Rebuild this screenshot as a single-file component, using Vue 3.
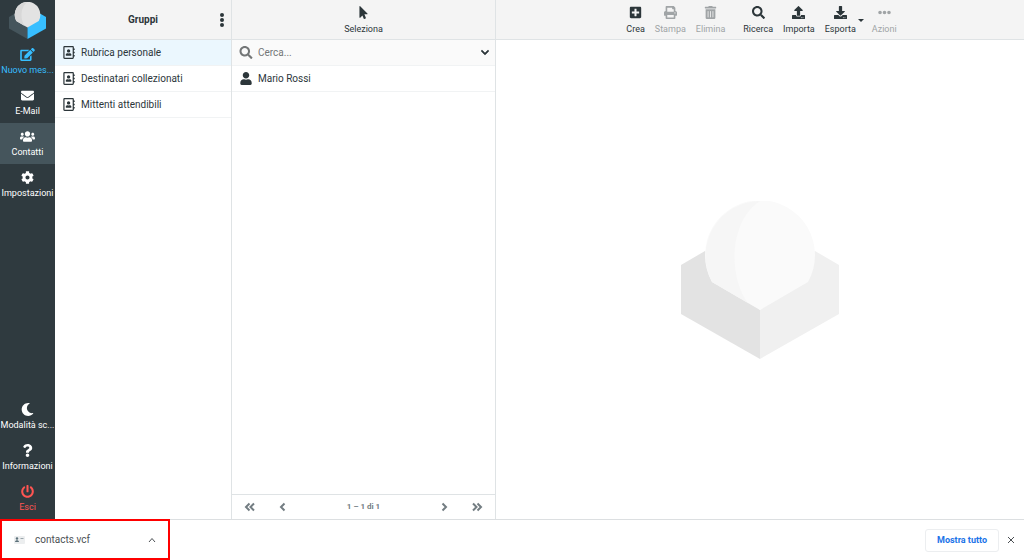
<script setup>
import { ref } from 'vue'

const icons = {
  edit: { box: '0 0 576 512', d: 'M402.6 83.2l90.2 90.2c3.8 3.8 3.8 10 0 13.8L274.4 405.6l-92.8 10.3c-12.4 1.4-22.9-9.1-21.5-21.5l10.3-92.8L388.8 83.2c3.8-3.8 10-3.8 13.8 0zm162-22.9l-48.8-48.8c-15.2-15.2-39.9-15.2-55.2 0l-35.4 35.4c-3.8 3.8-3.8 10 0 13.8l90.2 90.2c3.8 3.8 10 3.8 13.8 0l35.4-35.4c15.2-15.3 15.2-40 0-55.2zM384 346.2V448H64V128h229.8c3.2 0 6.2-1.3 8.5-3.5l40-40c7.6-7.6 2.2-20.5-8.5-20.5H48C21.5 64 0 85.5 0 112v352c0 26.5 21.5 48 48 48h352c26.5 0 48-21.5 48-48V306.2c0-10.7-12.9-16-20.5-8.5l-40 40c-2.2 2.3-3.5 5.3-3.5 8.5z' },
  mail: { box: '0 0 512 512', d: 'M502.3 190.8c3.9-3.1 9.7-.2 9.7 4.7V400c0 26.5-21.5 48-48 48H48c-26.5 0-48-21.5-48-48V195.6c0-5 5.7-7.8 9.7-4.7 22.4 17.4 52.1 39.5 154.1 113.6 21.1 15.4 56.7 47.8 92.2 47.6 35.7.3 72-32.8 92.3-47.6 102-74.1 131.6-96.3 154-113.7zM256 320c23.2.4 56.6-29.2 73.4-41.4 132.7-96.3 142.8-104.7 173.4-128.7 5.8-4.5 9.2-11.5 9.2-18.9v-19c0-26.5-21.5-48-48-48H48c-26.5 0-48 21.5-48 48v19c0 7.4 3.4 14.3 9.2 18.9 30.6 23.9 40.7 32.4 173.4 128.7 16.8 12.2 50.2 41.8 73.4 41.4z' },
  users: { box: '0 0 640 512', d: 'M96 224c35.3 0 64-28.7 64-64s-28.7-64-64-64-64 28.7-64 64 28.7 64 64 64zm448 0c35.3 0 64-28.7 64-64s-28.7-64-64-64-64 28.7-64 64 28.7 64 64 64zm32 32h-64c-17.6 0-33.5 7.1-45.1 18.6 40.3 22.1 68.9 62 75.1 109.4h66c17.7 0 32-14.3 32-32v-32c0-35.3-28.7-64-64-64zm-256 0c61.9 0 112-50.1 112-112S381.9 32 320 32 208 82.1 208 144s50.1 112 112 112zm76.8 32h-8.3c-20.8 10-43.9 16-68.5 16s-47.6-6-68.5-16h-8.3C179.6 288 128 339.6 128 403.2V432c0 26.5 21.5 48 48 48h288c26.5 0 48-21.5 48-48v-28.8c0-63.6-51.6-115.2-115.2-115.2zm-223.7-13.4C161.5 263.1 145.6 256 128 256H64c-35.3 0-64 28.7-64 64v32c0 17.7 14.3 32 32 32h65.9c6.3-47.4 34.9-87.3 75.2-109.4z' },
  cog: { box: '0 0 512 512', d: 'M487.4 315.7l-42.6-24.6c4.3-23.2 4.3-47 0-70.2l42.6-24.6c4.9-2.8 7.1-8.6 5.5-14-11.1-35.6-30-67.8-54.7-94.6-3.8-4.1-10-5.1-14.8-2.3L380.8 110c-17.9-15.4-38.5-27.3-60.8-35.1V25.8c0-5.6-3.9-10.5-9.4-11.7-36.7-8.2-74.3-7.8-109.2 0-5.5 1.2-9.4 6.1-9.4 11.7V75c-22.2 7.9-42.8 19.8-60.8 35.1L88.7 85.5c-4.9-2.8-11-1.9-14.8 2.3-24.7 26.7-43.6 58.9-54.7 94.6-1.7 5.4.6 11.2 5.5 14L67.3 221c-4.3 23.2-4.3 47 0 70.2l-42.6 24.6c-4.9 2.8-7.1 8.6-5.5 14 11.1 35.6 30 67.8 54.7 94.6 3.8 4.1 10 5.1 14.8 2.3l42.6-24.6c17.9 15.4 38.5 27.3 60.8 35.1v49.2c0 5.6 3.9 10.5 9.4 11.7 36.7 8.2 74.3 7.8 109.2 0 5.5-1.2 9.4-6.1 9.4-11.7v-49.2c22.2-7.9 42.8-19.8 60.8-35.1l42.6 24.6c4.9 2.8 11 1.9 14.8-2.3 24.7-26.7 43.6-58.9 54.7-94.6 1.5-5.5-.7-11.3-5.6-14.1zM256 336c-44.1 0-80-35.9-80-80s35.9-80 80-80 80 35.9 80 80-35.9 80-80 80z' },
  moon: { box: '0 0 512 512', d: 'M283.2 512c79 0 151.1-35.9 198.9-94.8 7-8.7-.7-21.4-11.6-19.3-124.2 23.6-238.3-71.6-238.3-197 0-72.2 38.7-138.6 101.5-174.4 9.7-5.5 7.3-20.2-3.7-22.2A258.2 258.2 0 0 0 283.2 0c-141.3 0-256 114.5-256 256 0 141.3 114.5 256 256 256z' },
  question: { box: '0 0 384 512', d: 'M202 0C122.2 0 70.5 32.7 29.9 91c-7.4 10.6-5.1 25.1 5.2 32.9l43.1 32.7c10.4 7.9 25.1 6 33.3-4.1 25-31.4 43.6-49.5 82.7-49.5 30.8 0 68.8 19.8 68.8 49.6 0 22.6-18.6 34.2-49 51.2-35.4 19.9-82.3 44.6-82.3 106.4V320c0 13.3 10.7 24 24 24h72.5c13.3 0 24-10.7 24-24v-5.8c0-42.9 125.3-44.6 125.3-160.6C377.5 66.3 286.9 0 202 0zM192 373.5c-38.2 0-69.3 31.1-69.3 69.3S153.8 512 192 512s69.3-31.1 69.3-69.3-31.1-69.2-69.3-69.2z' },
  power: { box: '0 0 512 512', d: 'M400 54.1c63 45 104 118.6 104 201.9 0 136.8-110.8 247.7-247.5 248C120 504.3 8.2 393 8 256.4 7.9 173.1 48.9 99.3 111.8 54.2c11.7-8.3 28-4.8 35 7.7L162.6 90c5.9 10.5 3.1 23.8-6.6 31-41.5 30.8-68 79.6-68 134.9-.1 92.3 74.5 168.1 168 168.1 91.6 0 168.6-74.2 168-169.1-.3-51.8-24.7-101.8-68.1-134-9.7-7.2-12.4-20.5-6.5-30.9l15.8-28.1c7-12.4 23.2-16.1 34.8-7.8zM296 264V24c0-13.3-10.7-24-24-24h-32c-13.3 0-24 10.7-24 24v240c0 13.3 10.7 24 24 24h32c13.3 0 24-10.7 24-24z' },
  book: { box: '0 0 448 512', d: 'M436 160c6.6 0 12-5.4 12-12v-40c0-6.6-5.4-12-12-12h-20V48c0-26.5-21.5-48-48-48H48C21.5 0 0 21.5 0 48v416c0 26.5 21.5 48 48 48h320c26.5 0 48-21.5 48-48v-48h20c6.6 0 12-5.4 12-12v-40c0-6.6-5.4-12-12-12h-20v-64h20c6.6 0 12-5.4 12-12v-40c0-6.6-5.4-12-12-12h-20v-64h20zm-68 304H48V48h320v416zM208 256c35.3 0 64-28.7 64-64s-28.7-64-64-64-64 28.7-64 64 28.7 64 64 64zm-89.6 128h179.2c12.4 0 22.4-8.6 22.4-19.2v-19.2c0-31.8-30.1-57.6-67.2-57.6-10.8 0-18.7 8-44.8 8-26.9 0-33.4-8-44.8-8-37.1 0-67.2 25.8-67.2 57.6v19.2c0 10.6 10 19.2 22.4 19.2z' },
  pointer: { box: '0 0 320 512', d: 'M302.2 329.1H196.1l55.8 136c3.9 9.4-.5 20-9.4 24l-49.2 21.4c-9.2 4-19.4-.6-23.3-9.7L117 371.7l-86.7 89.1C18.7 472.7 0 463.6 0 448V18.3C0 1.9 19.9-6.1 30.3 5.4l284.4 292.6c11.5 11.2 3 31.1-12.5 31.1z' },
  search: { box: '0 0 512 512', d: 'M505 442.7L405.3 343c-4.5-4.5-10.6-7-17-7H372c27.6-35.3 44-79.7 44-128C416 93.1 322.9 0 208 0S0 93.1 0 208s93.1 208 208 208c48.3 0 92.7-16.4 128-44v16.3c0 6.4 2.5 12.5 7 17l99.7 99.7c9.4 9.4 24.6 9.4 33.9 0l28.3-28.3c9.4-9.4 9.4-24.6.1-34zM208 336c-70.7 0-128-57.2-128-128 0-70.7 57.2-128 128-128 70.7 0 128 57.2 128 128 0 70.7-57.2 128-128 128z' },
  user: { box: '0 0 448 512', d: 'M224 256c70.7 0 128-57.3 128-128S294.7 0 224 0 96 57.3 96 128s57.3 128 128 128zm89.6 32h-16.7c-22.2 10.2-46.9 16-72.9 16s-50.6-5.8-72.9-16h-16.7C60.2 288 0 348.2 0 422.4V464c0 26.5 21.5 48 48 48h352c26.5 0 48-21.5 48-48v-41.6c0-74.2-60.2-134.4-134.4-134.4z' },
  down: { box: '0 0 448 512', d: 'M207 381.5L12.7 187.1c-9.4-9.4-9.4-24.6 0-33.9l22.7-22.7c9.4-9.4 24.5-9.4 33.9 0L224 284.5l154.7-154c9.4-9.4 24.5-9.4 33.9 0l22.7 22.7c9.4 9.4 9.4 24.6 0 33.9L241 381.5c-9.4 9.4-24.6 9.4-34 0z' },
  plus: { box: '0 0 448 512', d: 'M400 32H48C21.5 32 0 53.5 0 80v352c0 26.5 21.5 48 48 48h352c26.5 0 48-21.5 48-48V80c0-26.5-21.5-48-48-48zm-32 252c0 6.6-5.4 12-12 12h-92v92c0 6.6-5.4 12-12 12h-56c-6.6 0-12-5.4-12-12v-92H92c-6.6 0-12-5.4-12-12v-56c0-6.6 5.4-12 12-12h92v-92c0-6.6 5.4-12 12-12h56c6.6 0 12 5.4 12 12v92h92c6.6 0 12 5.4 12 12v56z' },
  print: { box: '0 0 512 512', d: 'M448 192V77.3c0-8.5-3.4-16.7-9.4-22.7L393.4 9.4c-6-6-14.2-9.4-22.7-9.4H96C78.3 0 64 14.3 64 32v160c-35.3 0-64 28.7-64 64v112c0 8.8 7.2 16 16 16h48v96c0 17.7 14.3 32 32 32h320c17.7 0 32-14.3 32-32v-96h48c8.8 0 16-7.2 16-16V256c0-35.3-28.7-64-64-64zm-64 256H128v-96h256v96zm0-224H128V64h192v48c0 8.8 7.2 16 16 16h48v96zm48 72c-13.3 0-24-10.7-24-24s10.7-24 24-24 24 10.7 24 24-10.7 24-24 24z' },
  trash: { box: '0 0 448 512', d: 'M32 464a48 48 0 0 0 48 48h288a48 48 0 0 0 48-48V128H32zm272-256a16 16 0 0 1 32 0v224a16 16 0 0 1-32 0zm-96 0a16 16 0 0 1 32 0v224a16 16 0 0 1-32 0zm-96 0a16 16 0 0 1 32 0v224a16 16 0 0 1-32 0zM432 32H312l-9.4-18.7A24 24 0 0 0 281.1 0H166.8a23.7 23.7 0 0 0-21.4 13.3L136 32H16A16 16 0 0 0 0 48v32a16 16 0 0 0 16 16h416a16 16 0 0 0 16-16V48a16 16 0 0 0-16-16z' },
  upload: { box: '0 0 512 512', d: 'M296 384h-80c-13.3 0-24-10.7-24-24V192h-87.7c-17.8 0-26.7-21.5-14.1-34.1L242.3 5.7c7.5-7.5 19.8-7.5 27.3 0l152.2 152.2c12.6 12.6 3.7 34.1-14.1 34.1H320v168c0 13.3-10.7 24-24 24zm216-8v112c0 13.3-10.7 24-24 24H24c-13.3 0-24-10.7-24-24V376c0-13.3 10.7-24 24-24h136v8c0 30.9 25.1 56 56 56h80c30.9 0 56-25.1 56-56v-8h136c13.3 0 24 10.7 24 24zm-124 88c0-11-9-20-20-20s-20 9-20 20 9 20 20 20 20-9 20-20zm64 0c0-11-9-20-20-20s-20 9-20 20 9 20 20 20 20-9 20-20z' },
  download: { box: '0 0 512 512', d: 'M216 0h80c13.3 0 24 10.7 24 24v168h87.7c17.8 0 26.7 21.5 14.1 34.1L269.7 378.3c-7.5 7.5-19.8 7.5-27.3 0L90.1 226.1c-12.6-12.6-3.7-34.1 14.1-34.1H192V24c0-13.3 10.7-24 24-24zm296 376v112c0 13.3-10.7 24-24 24H24c-13.3 0-24-10.7-24-24V376c0-13.3 10.7-24 24-24h146.7l49 49c20.1 20.1 52.5 20.1 72.6 0l49-49H488c13.3 0 24 10.7 24 24zm-124 88c0-11-9-20-20-20s-20 9-20 20 9 20 20 20 20-9 20-20zm64 0c0-11-9-20-20-20s-20 9-20 20 9 20 20 20 20-9 20-20z' },
  dots: { box: '0 0 512 512', d: 'M328 256a72 72 0 1 1-144 0 72 72 0 0 1 144 0zm104-72a72 72 0 1 0 0 144 72 72 0 0 0 0-144zM80 184a72 72 0 1 0 0 144 72 72 0 0 0 0-144z' }
}

const mainMenu = [
  { label: 'Nuovo mes...', icon: 'edit', kind: 'compose' },
  { label: 'E-Mail', icon: 'mail' },
  { label: 'Contatti', icon: 'users', kind: 'current' },
  { label: 'Impostazioni', icon: 'cog' }
]
const footMenu = [
  { label: 'Modalità sc...', icon: 'moon' },
  { label: 'Informazioni', icon: 'question' },
  { label: 'Esci', icon: 'power', kind: 'logout' }
]
const groups = ['Rubrica personale', 'Destinatari collezionati', 'Mittenti attendibili']
const selected = ref(0)
const query = ref('')
const tools = [
  { label: 'Crea', icon: 'plus' },
  { label: 'Stampa', icon: 'print', disabled: true },
  { label: 'Elimina', icon: 'trash', disabled: true },
  { label: 'Ricerca', icon: 'search', spaced: true },
  { label: 'Importa', icon: 'upload' },
  { label: 'Esporta', icon: 'download', menu: true },
  { label: 'Azioni', icon: 'dots', disabled: true }
]
</script>

<template>
  <div class="window">
    <div class="app">
      <nav class="taskbar" aria-label="Menu principale">
        <svg class="logo" viewBox="0 0 158 158" aria-hidden="true">
          <path fill="#45555c" d="M0 64L24 50L79 109V158L0 113Z" />
          <path fill="#37beff" d="M158 64L134 50L79 109V158L158 113Z" />
          <path fill="#e3e3e3" d="M79 109L31 81A55 55 0 1 1 127 81Z" />
          <path fill="#d8d8d8" d="M67 102L31 81A55 55 0 0 1 79 0C48 20 47 76 67 102Z" />
        </svg>
        <a v-for="m in mainMenu" :key="m.label" href="#" class="task" :class="m.kind">
          <svg class="glyph" :viewBox="icons[m.icon].box" aria-hidden="true"><path :d="icons[m.icon].d" /></svg>
          <span>{{ m.label }}</span>
        </a>
        <div class="spacer"></div>
        <a v-for="m in footMenu" :key="m.label" href="#" class="task" :class="m.kind">
          <svg class="glyph" :viewBox="icons[m.icon].box" aria-hidden="true"><path :d="icons[m.icon].d" /></svg>
          <span>{{ m.label }}</span>
        </a>
      </nav>

      <section class="groups">
        <header class="head">
          <h2>Gruppi</h2>
          <button class="kebab" type="button" aria-label="Azioni gruppo">
            <svg viewBox="0 0 4 14"><circle cx="2" cy="2" r="2" /><circle cx="2" cy="7" r="2" /><circle cx="2" cy="12" r="2" /></svg>
          </button>
        </header>
        <ul>
          <li v-for="(g, i) in groups" :key="g">
            <a href="#" class="row" :class="{ selected: i === selected }" @click.prevent="selected = i">
              <svg class="rowicon" :viewBox="icons.book.box" aria-hidden="true"><path :d="icons.book.d" /></svg>
              <span>{{ g }}</span>
            </a>
          </li>
        </ul>
      </section>

      <section class="contacts">
        <header class="head">
          <button class="tool" type="button">
            <svg class="glyph" :viewBox="icons.pointer.box" aria-hidden="true"><path :d="icons.pointer.d" /></svg>
            <span>Seleziona</span>
          </button>
        </header>
        <div class="row search">
          <svg class="rowicon" :viewBox="icons.search.box" aria-hidden="true"><path :d="icons.search.d" /></svg>
          <input v-model="query" type="text" placeholder="Cerca..." aria-label="Cerca" />
          <button type="button" aria-label="Opzioni di ricerca">
            <svg :viewBox="icons.down.box"><path :d="icons.down.d" /></svg>
          </button>
        </div>
        <ul>
          <li>
            <a href="#" class="row">
              <svg class="rowicon" :viewBox="icons.user.box" aria-hidden="true"><path :d="icons.user.d" /></svg>
              <span>Mario Rossi</span>
            </a>
          </li>
        </ul>
        <footer class="pager">
          <button type="button" aria-label="Prima pagina"><svg viewBox="0 0 12 10"><path d="M5.5 1.5L2 5L5.5 8.500M10 1.500L6.500 5L10 8.500" /></svg></button>
          <button type="button" aria-label="Pagina precedente"><svg viewBox="0 0 12 10"><path d="M7.500 1.500L4 5L7.500 8.500" /></svg></button>
          <span>1 – 1 di 1</span>
          <button type="button" aria-label="Pagina successiva"><svg viewBox="0 0 12 10"><path d="M4.500 1.500L8 5L4.500 8.500" /></svg></button>
          <button type="button" aria-label="Ultima pagina"><svg viewBox="0 0 12 10"><path d="M2 1.500L5.500 5L2 8.500M6.500 1.500L10 5L6.500 8.500" /></svg></button>
        </footer>
      </section>

      <main class="content">
        <header class="head">
          <template v-for="t in tools" :key="t.label">
            <button class="tool" :class="{ spaced: t.spaced }" type="button" :disabled="t.disabled">
              <svg class="glyph" :viewBox="icons[t.icon].box" aria-hidden="true"><path :d="icons[t.icon].d" /></svg>
              <span>{{ t.label }}</span>
            </button>
            <button v-if="t.menu" class="caret" type="button" aria-label="Opzioni di esportazione">
              <svg viewBox="0 0 6 3"><path d="M0 0H6L3 3Z" /></svg>
            </button>
          </template>
        </header>
        <div class="blank">
          <svg viewBox="0 0 158 158" aria-hidden="true">
            <path fill="#e3e3e3" d="M0 64L24 50L79 109V158L0 113Z" />
            <path fill="#f0f0f0" d="M158 64L134 50L79 109V158L158 113Z" />
            <path fill="#fafafa" d="M79 109L31 81A55 55 0 1 1 127 81Z" />
            <path fill="#f6f6f6" d="M67 102L31 81A55 55 0 0 1 79 0C48 20 47 76 67 102Z" />
          </svg>
        </div>
      </main>
    </div>

    <aside class="downloads" aria-label="Download">
      <button class="file" type="button">
        <svg class="card" viewBox="0 0 11 8" aria-hidden="true">
          <rect width="11" height="8" rx="1" fill="#eceeef" />
          <circle cx="3" cy="2.5" r="1.2" fill="#5b707a" />
          <path d="M1 6C1 3.700 5 3.700 5 6Z" fill="#5b707a" />
          <path d="M6.500 2.500H9.500" stroke="#9aa5ab" stroke-width="1" />
        </svg>
        <span>contacts.vcf</span>
        <svg class="up" viewBox="0 0 8 6" aria-hidden="true"><path d="M1 5L4 1.500L7 5" /></svg>
      </button>
      <button class="showall" type="button">Mostra tutto</button>
      <button class="close" type="button" aria-label="Chiudi">
        <svg viewBox="0 0 8 8"><path d="M1 1L7 7M7 1L1 7" /></svg>
      </button>
    </aside>
  </div>
</template>

<style>
body {
  margin: 0;
}
</style>

<style scoped>
* {
  box-sizing: border-box;
}
.window {
  display: flex;
  flex-direction: column;
  min-height: 100vh;
  background: #fff;
  color: #2c363a;
  font-family: Roboto, "Liberation Sans", sans-serif;
  font-size: 10px;
  line-height: 12px;
}
button {
  margin: 0;
  padding: 0;
  border: 0;
  background: none;
  color: inherit;
  font: inherit;
}
a {
  color: inherit;
  text-decoration: none;
}
svg {
  display: block;
  fill: currentColor;
}
ul {
  margin: 0;
  padding: 0;
  list-style: none;
}
.app {
  flex: 1;
  display: grid;
  grid-template-columns: 55px 177px 264px 1fr;
}
.taskbar {
  display: flex;
  flex-direction: column;
  background: #2f3a3f;
  color: #fff;
}
.logo {
  width: 37px;
  height: 37px;
  margin: 2px auto;
}
.task {
  display: flex;
  flex-direction: column;
  align-items: center;
  gap: 3px;
  height: 41px;
  padding-top: 7px;
  font-size: 9px;
  white-space: nowrap;
}
.glyph {
  width: 15px;
  height: 13px;
}
.compose {
  color: #37beff;
}
.current {
  background: #45555c;
}
.logout {
  color: #ff5552;
}
.spacer {
  flex: 1;
}
.groups,
.contacts {
  display: flex;
  flex-direction: column;
  border-right: 1px solid #dfe3e5;
}
.head {
  position: relative;
  display: flex;
  align-items: center;
  justify-content: center;
  height: 40px;
  padding-top: 1px;
  background: #f4f4f4;
  border-bottom: 1px solid #dfe3e5;
}
h2 {
  margin: 0;
  font-size: 10px;
  font-weight: 700;
}
.kebab {
  position: absolute;
  right: 7px;
}
.kebab svg {
  width: 4px;
  height: 14px;
}
.row {
  display: flex;
  align-items: center;
  gap: 5px;
  height: 26px;
  padding: 0 6px 0 7px;
  border-bottom: 1px solid #f1f3f4;
}
.selected {
  background: #ebf7fe;
}
.rowicon {
  width: 14px;
  height: 13px;
}
.search {
  background: #fafafa;
  color: #737677;
}
.search input {
  flex: 1;
  min-width: 0;
  padding: 0;
  border: 0;
  outline: 0;
  background: none;
  color: #2c363a;
  font: inherit;
}
.search input::placeholder {
  color: #737677;
  opacity: 1;
}
.search button {
  color: #2c363a;
}
.search button svg {
  width: 8px;
  height: 9px;
  stroke: currentColor;
  stroke-width: 30;
}
.tool {
  display: flex;
  flex-direction: column;
  align-items: center;
  gap: 4px;
  padding: 0 5px;
  font-size: 9px;
}
.tool:disabled {
  color: #a0a4a6;
}
.spaced {
  margin-left: 8px;
}
.caret {
  margin: 0 3px 0 -3px;
}
.caret svg {
  width: 6px;
  height: 3px;
}
.pager {
  display: flex;
  align-items: center;
  gap: 21px;
  height: 25px;
  margin-top: auto;
  padding: 0 12px;
  border-top: 1px solid #dfe3e5;
  color: #737d82;
  font-size: 8px;
  font-weight: 700;
}
.pager span {
  flex: 1;
  text-align: center;
}
.pager svg {
  width: 12px;
  height: 10px;
  fill: none;
  stroke: currentColor;
  stroke-width: 2;
}
.content {
  display: flex;
  flex-direction: column;
}
.content .head {
  padding-left: 3px;
}
.blank {
  flex: 1;
  display: flex;
  align-items: center;
  justify-content: center;
}
.blank svg {
  width: 158px;
  height: 158px;
}
.downloads {
  display: flex;
  align-items: center;
  height: 41px;
  padding-right: 9px;
  border-top: 1px solid #dcdfe1;
  color: #4b4f53;
}
.file {
  display: flex;
  align-items: center;
  width: 170px;
  height: 41px;
  margin-top: -1px;
  padding: 0 12px;
  border: 2px solid #f00;
}
.card {
  width: 11px;
  height: 8px;
  margin-right: 10px;
}
.up {
  width: 8px;
  height: 6px;
  margin-left: auto;
}
.up,
.close svg {
  fill: none;
  stroke: currentColor;
  stroke-width: 1;
}
.showall {
  height: 23px;
  margin-left: auto;
  padding: 0 11px;
  border: 1px solid #eceef0;
  border-radius: 3px;
  color: #1a73e8;
  font-size: 9px;
  font-weight: 700;
}
.close {
  margin-left: 8px;
}
.close svg {
  width: 8px;
  height: 8px;
}
</style>
